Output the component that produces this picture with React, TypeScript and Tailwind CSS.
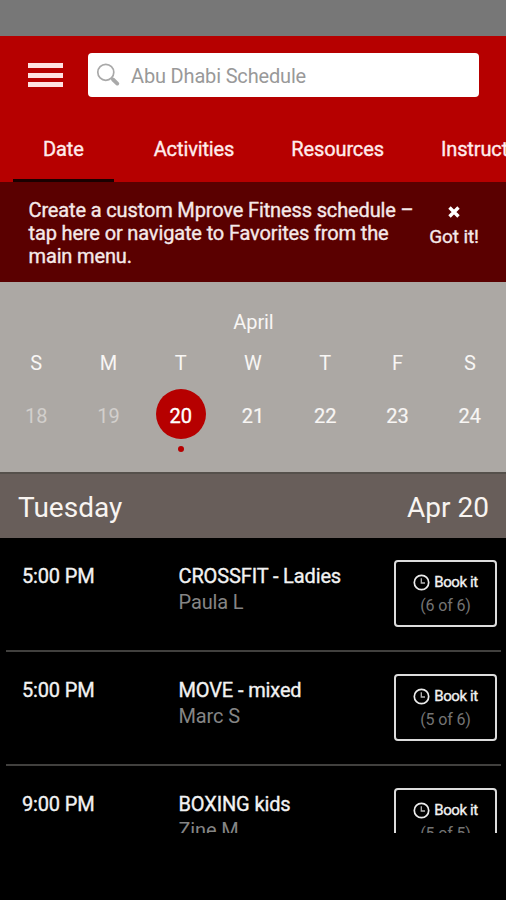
import { useState } from "react"

type Session = { time: string; title: string; coach: string; spots: string }

const tabs = [
  { name: "Date", className: "ml-[43px]" },
  { name: "Activities", className: "ml-[70px]" },
  { name: "Resources", className: "ml-[57px]" },
  { name: "Instructors", className: "ml-[57px]" },
]

const days = [
  { letter: "S", date: 18 },
  { letter: "M", date: 19 },
  { letter: "T", date: 20 },
  { letter: "W", date: 21 },
  { letter: "T", date: 22 },
  { letter: "F", date: 23 },
  { letter: "S", date: 24 },
]

const today = 20

const sessions: Session[] = [
  { time: "5:00 PM", title: "CROSSFIT - Ladies", coach: "Paula L", spots: "(6 of 6)" },
  { time: "5:00 PM", title: "MOVE - mixed", coach: "Marc S", spots: "(5 of 6)" },
  { time: "9:00 PM", title: "BOXING kids", coach: "Zine M", spots: "(5 of 5)" },
]

function SearchIcon() {
  return (
    <svg className="ml-[8px] shrink-0" width="24" height="24" viewBox="0 0 24 24" fill="none" stroke="#a9a9a9">
      <circle cx="9.8" cy="9.3" r="8" strokeWidth="1.7" />
      <path d="M15.5 15 L17.5 17" strokeWidth="2" />
      <path d="M17 16.5 L21.3 20.6" strokeWidth="3.8" strokeLinecap="round" />
    </svg>
  )
}

function ClockIcon() {
  return (
    <svg width="17" height="17" viewBox="0 0 17 17" fill="none" stroke="#ececec">
      <circle cx="8.5" cy="8.5" r="7.2" strokeWidth="1.7" />
      <path d="M8.3 4.2 V9 H12" strokeWidth="1.3" stroke="#b5b5b5" />
    </svg>
  )
}

function SessionRow({ session }: { session: Session }) {
  return (
    <div className="ml-[6px] mr-[5px] flex h-[114px] border-b-2 border-[#41403e] pr-[4px] pt-[22px]">
      <div className="w-[172px] shrink-0 pl-[16px] pt-[4px] text-[20px] leading-[24px] tracking-[-0.15px] text-[#f2f2f2] [-webkit-text-stroke:0.35px]">
        {session.time}
      </div>
      <div className="flex-1 whitespace-nowrap pl-[0.5px] pt-[4px] text-[20px] tracking-[-0.13px]">
        <div className="leading-[24px] text-[#f2f2f2] [-webkit-text-stroke:0.35px]">{session.title}</div>
        <div className="mt-px leading-[26px] text-[#858585]">{session.coach}</div>
      </div>
      <button className="flex h-[67px] w-[103px] shrink-0 flex-col items-center rounded-[4px] border-2 border-[#dcdcdc] pt-[9px]">
        <span className="flex items-center gap-[4px] text-[15px] leading-[22px] tracking-[-0.4px] text-[#f2f2f2] [-webkit-text-stroke:0.35px]">
          <ClockIcon />
          Book it
        </span>
        <span className="pt-px text-[16px] leading-[24px] tracking-[-0.15px] text-[#747474]">{session.spots}</span>
      </button>
    </div>
  )
}

export default function App() {
  const [activeTab, setActiveTab] = useState("Date")
  const [selected, setSelected] = useState(today)

  return (
    <main className="flex h-[900px] w-[506px] flex-col overflow-hidden bg-black font-['Roboto',sans-serif] text-white">
      <div className="h-[36px] shrink-0 bg-[#777777]" />

      <header className="flex h-[146px] shrink-0 flex-col bg-[#b60000]">
        <div className="flex pt-[17px]">
          <button className="ml-[28px] mt-[10px] flex h-[24px] w-[35px] flex-col justify-between">
            <span className="h-[5px] w-full bg-[#ffe1e1]" />
            <span className="h-[5px] w-full bg-[#ffe1e1]" />
            <span className="h-[5px] w-full bg-[#ffe1e1]" />
          </button>
          <div className="ml-[25px] flex h-[44px] w-[391px] items-center rounded-[4px] bg-white">
            <SearchIcon />
            <span className="ml-[11px] mt-[2px] text-[20px] leading-[24px] tracking-[-0.17px] text-[#999999]">
              Abu Dhabi Schedule
            </span>
          </div>
        </div>
        <nav className="flex flex-1 overflow-hidden whitespace-nowrap">
          {tabs.map((tab) => (
            <button
              key={tab.name}
              onClick={() => setActiveTab(tab.name)}
              className={`relative flex shrink-0 items-start pt-[40px] text-[20px] leading-[24px] tracking-[-0.12px] text-[#ffecec] [-webkit-text-stroke:0.35px] ${tab.className}`}
            >
              {tab.name}
              {activeTab === tab.name && <span className="absolute -inset-x-[30px] bottom-0 h-[3px] bg-[#1a0000]" />}
            </button>
          ))}
        </nav>
      </header>

      <section className="flex h-[100px] shrink-0 bg-[#5a0000] text-[20px] leading-[23px] tracking-[-0.14px] text-[#f5e9e9] [-webkit-text-stroke:0.35px]">
        <p className="w-[400px] whitespace-nowrap pl-[28.5px] pt-[17px]">
          Create a custom Mprove Fitness schedule –
          <br />
          tap here or navigate to Favorites from the
          <br />
          main menu.
        </p>
        <button className="ml-[29px] flex w-[50px] flex-col items-center whitespace-nowrap pt-[24px]">
          <svg width="12" height="12" viewBox="0 0 12 12" stroke="#fff" strokeWidth="3.4">
            <path d="M1.5 1.5 L10.5 10.5 M10.5 1.5 L1.5 10.5" />
          </svg>
          <span className="mt-[7px] text-[19px]">Got it!</span>
        </button>
      </section>

      <section className="h-[190px] shrink-0 bg-[#aca8a4] pt-[28px] text-center text-[20px] leading-[24px] text-[#f8f6f4]">
        <div className="pl-px tracking-[-0.1px]">April</div>
        <div className="mt-[17px] grid grid-cols-7">
          {days.map((day) => (
            <button key={day.date} onClick={() => setSelected(day.date)} className="flex flex-col items-center">
              <span>{day.letter}</span>
              <span
                className={`mt-[14px] flex h-[50px] w-[50px] items-center justify-center rounded-full pt-[3px] ${
                  day.date === selected
                    ? "bg-[#b60000] text-white [-webkit-text-stroke:0.35px]"
                    : day.date < today
                      ? "text-[#d2cfcc]"
                      : "[-webkit-text-stroke:0.2px]"
                }`}
              >
                {day.date}
              </span>
              {day.date === today && <span className="mt-[7px] h-[6px] w-[6px] rounded-full bg-[#b60000]" />}
            </button>
          ))}
        </div>
      </section>

      <div className="flex h-[66px] shrink-0 items-center justify-between border-t-2 border-[#55504b] bg-[#685e5a] pl-[18px] pr-[17px] pt-[3px] text-[28px] leading-[34px] text-[#f8f4f1]">
        <span>Tuesday</span>
        <span>Apr 20</span>
      </div>

      <section className="h-[295px] shrink-0 overflow-hidden">
        {sessions.map((session) => (
          <SessionRow key={session.title} session={session} />
        ))}
      </section>
    </main>
  )
}
